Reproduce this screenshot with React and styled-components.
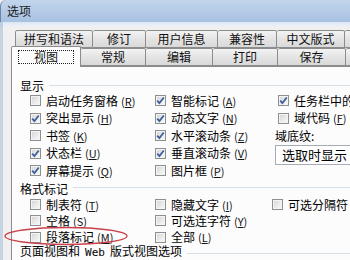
import React from "react";
import styled, { createGlobalStyle } from "styled-components";

const Global = createGlobalStyle`
  html, body { margin: 0; padding: 0; }
  body {
    width: 350px; height: 260px; overflow: hidden;
    font-family: "Noto Sans CJK SC", "Noto Sans", sans-serif;
    font-size: 12px; color: #000;
  }
`;

const Window = styled.div`
  position: relative;
  width: 350px;
  height: 260px;
  overflow: hidden;
  background: #f0f0f0;
  display: flex;
  flex-direction: column;
`;

const TitleBar = styled.div`
  height: 22px;
  flex: none;
  display: flex;
  align-items: center;
  padding-left: 6px;
  background: linear-gradient(#c3d5ec, #b2c9e6 60%, #a9c1e2);
  border-top-left-radius: 6px;
  border-left: 1px solid #6d86a7;
  font-size: 12px;
  line-height: 12px;
  color: #1a1a1a;
`;

const Band = styled.div`
  height: 5px;
  flex: none;
  background: linear-gradient(#dde8f4, #eef2f6);
  border-left: 3px solid #bccde2;
`;

const Body = styled.div`
  flex: 1;
  display: flex;
  flex-direction: column;
  padding-left: 8px;
  border-left: 3px solid #c5d3e3;
  background: #f0f0f0;
  position: relative;
`;

const TabRow = styled.div`
  display: flex;
  height: 18px;
  margin-left: ${(p) => p.$offset}px;
  margin-top: ${(p) => p.$top || 0}px;
  align-items: flex-end;
`;

const Tab = styled.div`
  flex: none;
  width: ${(p) => p.$w}px;
  height: ${(p) => (p.$active ? 21 : 18)}px;
  box-sizing: border-box;
  display: flex;
  align-items: center;
  justify-content: center;
  border: 1px solid #8c8c8c;
  border-bottom: ${(p) => (p.$active ? "none" : "1px solid #8c8c8c")};
  border-left-width: ${(p) => (p.$first ? 1 : 0)}px;
  border-radius: 2px 2px 0 0;
  background: ${(p) =>
    p.$active ? "#fcfcfd" : "linear-gradient(#f3f3f3, #e4e4e4 50%, #d9d9d9)"};
  font-size: 12px;
  line-height: 14px;
  color: #111;
  position: relative;
  z-index: ${(p) => (p.$active ? 2 : 1)};
  margin-bottom: ${(p) => (p.$active ? -1 : 0)}px;
`;

const Focus = styled.span`
  border: 1px dotted #222;
  padding: 0 15px;
  line-height: 12px;
`;

const Panel = styled.div`
  flex: 1;
  background: #fcfcfd;
  border-top: 1px solid #8c8c8c;
  border-left: 1px solid #8c8c8c;
  padding: 12px 0 0 8px;
  display: flex;
  flex-direction: column;
`;

const GroupHead = styled.div`
  display: flex;
  align-items: center;
  gap: 5px;
  height: 14px;
  line-height: 14px;
  white-space: nowrap;
  &::after {
    content: "";
    flex: 1;
    height: 1px;
    margin-top: ${(p) => (p.$lineOffset ? p.$lineOffset : -2)}px;
    background: #d5dfe5;
  }
`;

const Latin = styled.span`
  margin: 0 5px;
  font-family: "DejaVu Sans Mono", monospace;
  font-size: 11px;
`;

const Grid = styled.div`
  display: grid;
  grid-template-columns: 125px 123px 1fr;
  grid-auto-rows: ${(p) => p.$row}px;
  margin-left: 10px;
  margin-top: ${(p) => p.$top}px;
  margin-bottom: ${(p) => p.$bottom}px;
`;

const Item = styled.label`
  display: flex;
  align-items: center;
  gap: 5px;
  white-space: nowrap;
  line-height: 14px;
  margin-left: ${(p) => p.$shift || 0}px;
  grid-column: ${(p) => p.$col};
`;

const Box = styled.span`
  flex: none;
  width: 11px;
  height: 11px;
  box-sizing: border-box;
  border: 1px solid #8e8f8f;
  background: linear-gradient(135deg, #d3d3d3, #ececec 60%, #fafafa);
  box-shadow: inset 0 0 0 1px #f4f4f4;
  display: flex;
  align-items: center;
  justify-content: center;
`;

const Acc = styled.span`
  font-size: 11px;
  margin-left: 3px;
  color: #111;
  & u { text-underline-offset: 1px; }
`;

const Label = styled.span`
  grid-column: 3;
  margin-left: -3px;
  line-height: 14px;
  align-self: center;
`;

const Select = styled.div`
  grid-column: 3;
  grid-row: 4 / span 2;
  margin-left: -3px;
  height: 20px;
  box-sizing: border-box;
  border: 1px solid #a5acb5;
  background: #fff;
  display: flex;
  align-items: center;
  padding-left: 6px;
  width: 90px;
  font-size: 13px;
`;

const Ellipse = styled.svg`
  position: absolute;
  left: 4px;
  top: 226px;
  overflow: visible;
`;

const Check = () => (
  <svg width="9" height="9" viewBox="0 0 9 9">
    <path d="M1.2 4.6 L3.4 7 L7.8 1.5" fill="none" stroke="#3f5f9c" strokeWidth="1.8" />
  </svg>
);

const CB = ({ checked, text, acc, col, shift }) => (
  <Item $col={col} $shift={shift}>
    <Box>{checked && <Check />}</Box>
    <span>
      {text}
      {acc && (
        <Acc>
          (<u>{acc}</u>)
        </Acc>
      )}
    </span>
  </Item>
);

export default function App() {
  const row1 = [
    ["拼写和语法", 78],
    ["修订", 53],
    ["用户信息", 72],
    ["兼容性", 59],
    ["中文版式", 68],
    ["", 20],
  ];
  const row2 = [
    ["视图", 70],
    ["常规", 65],
    ["编辑", 67],
    ["打印", 65],
    ["保存", 68],
    ["", 20],
  ];
  return (
    <Window>
      <Global />
      <TitleBar>选项</TitleBar>
      <Band />
      <Body>
        <TabRow $offset={4} $top={3}>
          {row1.map(([t, w], i) => (
            <Tab key={t + i} $w={w} $first={i === 0}>
              {t}
            </Tab>
          ))}
        </TabRow>
        <TabRow $offset={0}>
          {row2.map(([t, w], i) => (
            <Tab key={t + i} $w={w} $first={i === 0} $active={i === 0}>
              {i === 0 ? <Focus>{t}</Focus> : t}
            </Tab>
          ))}
        </TabRow>
        <Panel>
          <GroupHead>显示</GroupHead>
          <Grid $row={17.5} $top={-1} $bottom={2}>
            <CB col={1} text="启动任务窗格" acc="R" />
            <CB col={2} checked text="智能标记" acc="A" />
            <CB col={3} checked text="任务栏中的" />
            <CB col={1} checked text="突出显示" acc="H" />
            <CB col={2} checked text="动态文字" acc="N" />
            <CB col={3} text="域代码" acc="F" />
            <CB col={1} text="书签" acc="K" />
            <CB col={2} checked text="水平滚动条" acc="Z" />
            <Label>域底纹:</Label>
            <CB col={1} checked text="状态栏" acc="U" />
            <CB col={2} checked text="垂直滚动条" acc="V" />
            <Select>选取时显示</Select>
            <CB col={1} checked text="屏幕提示" acc="Q" />
            <CB col={2} text="图片框" acc="P" />
          </Grid>
          <GroupHead>格式标记</GroupHead>
          <Grid $row={16.3} $top={1} $bottom={0}>
            <CB col={1} text="制表符" acc="T" />
            <CB col={2} text="隐藏文字" acc="I" />
            <CB col={3} text="可选分隔符" shift={-6} />
            <CB col={1} text="空格" acc="S" />
            <CB col={2} text="可选连字符" acc="Y" />
            <div />
            <CB col={1} text="段落标记" acc="M" />
            <CB col={2} text="全部" acc="L" />
          </Grid>
          <GroupHead $lineOffset={2}>
            <span>
              页面视图和<Latin>Web</Latin>版式视图选项
            </span>
          </GroupHead>
        </Panel>
      </Body>
      <Ellipse width="124" height="20" viewBox="0 0 124 20">
        <ellipse cx="62" cy="10" rx="61" ry="8.5" fill="none" stroke="#c9404a" strokeWidth="1.3" />
      </Ellipse>
    </Window>
  );
}
